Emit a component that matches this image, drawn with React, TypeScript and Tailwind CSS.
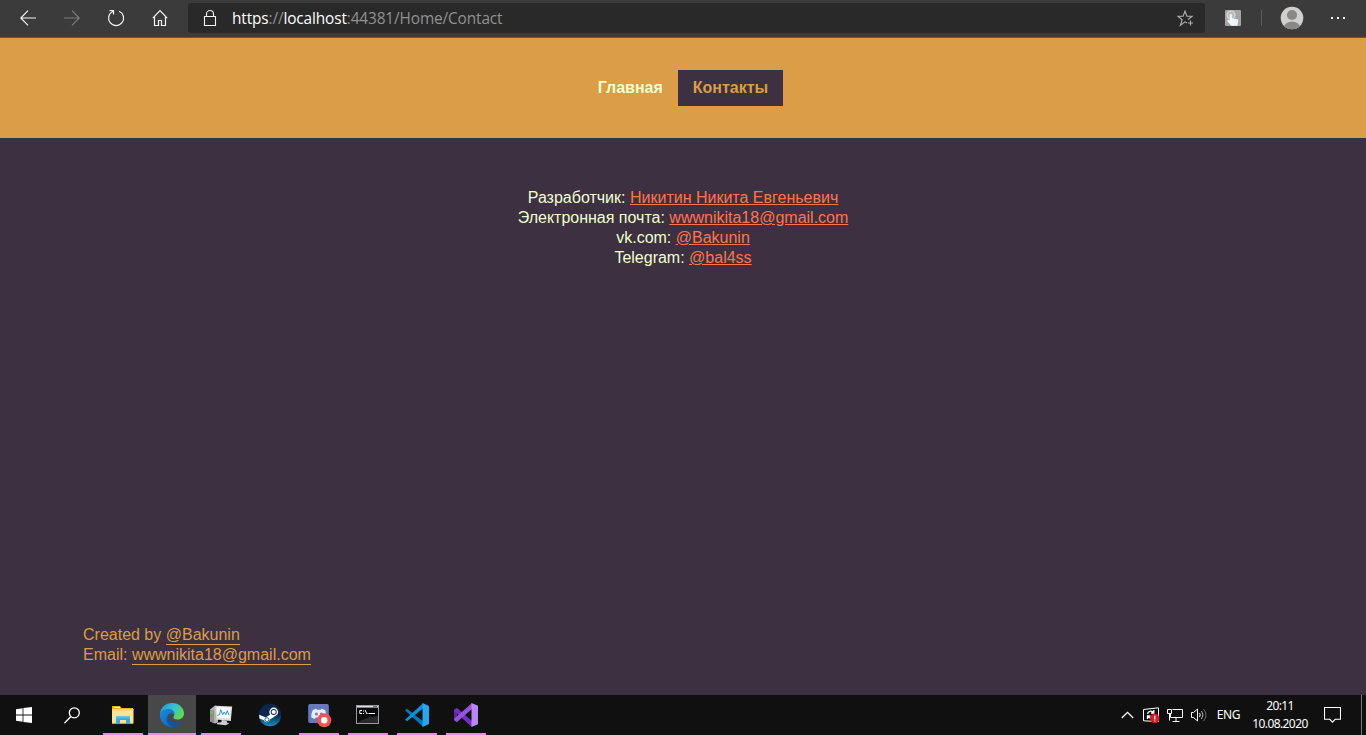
import type { ReactNode } from 'react';

const linkClass = 'text-[#ff7450] underline';
const footerLinkClass = 'border-b border-[#db9d47] pb-px text-[#db9d47]';

function BackIcon() {
  return (
    <svg width="16" height="16" viewBox="0 0 16 16" fill="none" stroke="currentColor" strokeWidth="1.2">
      <path d="M16 8H.8M8 .7.8 8 8 15.3" />
    </svg>
  );
}

function ForwardIcon() {
  return (
    <svg width="16" height="16" viewBox="0 0 16 16" fill="none" stroke="currentColor" strokeWidth="1.2">
      <path d="M0 8h15.2M8 .7 15.2 8 8 15.3" />
    </svg>
  );
}

function ReloadIcon() {
  return (
    <svg width="18" height="18" viewBox="0 0 18 18" fill="none" stroke="currentColor" strokeWidth="1.2">
      <path d="M12.2 2.2A7.5 7.5 0 1 1 6 2.2" />
      <path d="M2.5 1.5h4v4" />
    </svg>
  );
}

function HomeIcon() {
  return (
    <svg width="16" height="18" viewBox="0 0 16 18" fill="none" stroke="currentColor" strokeWidth="1.2">
      <path d="M.8 9.2 8 1.7l7.2 7.5" />
      <path d="M2.5 8v8.5h4v-5h3v5h4V8" />
    </svg>
  );
}

function LockIcon() {
  return (
    <svg width="14" height="18" viewBox="0 0 14 18" fill="none" stroke="currentColor" strokeWidth="1.1">
      <path d="M1.5 7.5h11v9h-11zM3.5 7.5V5a3.5 3.5 0 0 1 7 0v2.5" />
    </svg>
  );
}

function StarIcon() {
  return (
    <svg width="18" height="18" viewBox="0 0 18 18" fill="none" stroke="currentColor" strokeWidth="1.1">
      <path d="m10 14-2-1.2-4.6 3.4 1.7-5.5L.9 7.3h5.2L8 2.2l1.9 5.1h5.2l-4 3.2" />
      <path d="M13.5 11.5v5M11 14h5" />
    </svg>
  );
}

function TouchIcon() {
  return (
    <svg width="16" height="16" viewBox="0 0 16 16">
      <rect width="16" height="16" rx="1" fill="#a5a5a5" />
      <circle cx="6" cy="5" r="4" fill="#bcbcbc" stroke="#d8d8d8" strokeWidth="1.2" />
      <path d="M4.6 4.7q1.2-1.2 2.4 0v3.6l5.4.9q1 .4.8 1.4l-.8 5.2H6.5L2 11l1-1.3 1.6.8z" fill="#f0f6ff" />
    </svg>
  );
}

function AvatarIcon() {
  return (
    <svg width="24" height="24" viewBox="0 0 24 24">
      <defs>
        <clipPath id="avatar">
          <circle cx="12" cy="12" r="11.2" />
        </clipPath>
      </defs>
      <circle cx="12" cy="12" r="11.3" fill="#d2d0ce" />
      <g clipPath="url(#avatar)" fill="#8a8886">
        <circle cx="12" cy="9" r="5.1" />
        <ellipse cx="12" cy="21.2" rx="8" ry="5.6" />
      </g>
    </svg>
  );
}

function MoreIcon() {
  return (
    <svg width="16" height="4" viewBox="0 0 16 4" fill="currentColor">
      <path d="M1 1h2v2H1zM7 1h2v2H7zM13 1h2v2h-2z" />
    </svg>
  );
}

function WindowsIcon() {
  return (
    <svg width="16" height="16" viewBox="0 0 16 16" fill="#fff">
      <path d="M0 2.2 6.6 1.2v6.3H0zM7.4 1.1 16 0v7.5H7.4zM0 8.4h6.6v6.4L0 13.8zM7.4 8.4H16V16l-8.6-1.1z" />
    </svg>
  );
}

function SearchIcon() {
  return (
    <svg width="16" height="17" viewBox="0 0 16 17" fill="none" stroke="#fff" strokeWidth="1.3">
      <circle cx="10.3" cy="5.8" r="5" />
      <path d="m6.8 9.5-6.4 6.7" />
    </svg>
  );
}

function ExplorerIcon() {
  return (
    <svg width="24" height="24" viewBox="0 0 24 24">
      <path d="M1 4V3h8l1.5 2H22v4H1z" fill="#e5b52d" />
      <path d="M3 4h6v1H3z" fill="#fff4cd" />
      <path d="M1 6h21.5v14.5H1z" fill="#ffe393" />
      <path d="M1 7h21.5M1 20h21" stroke="#f4cb62" />
      <path d="M5 21v-7.5h14V21h-4v-4H9v4z" fill="#3aa7e0" />
      <path d="M5 13.5h14v2H5z" fill="#4fbdee" />
    </svg>
  );
}

function EdgeIcon() {
  return (
    <svg width="24" height="24" viewBox="0 0 24 24">
      <defs>
        <linearGradient id="edge-top" x1="0" y1=".2" x2="1" y2=".7">
          <stop stopColor="#2996d5" />
          <stop offset=".48" stopColor="#35c1d6" />
          <stop offset="1" stopColor="#65db3f" />
        </linearGradient>
        <linearGradient id="edge-side" x1="0" y1="0" x2="1" y2="1">
          <stop stopColor="#1b8bd8" />
          <stop offset="1" stopColor="#0c65b9" />
        </linearGradient>
      </defs>
      <path d="M0 11C.7 4 5.4 0 12 0c7 0 12 5 12 10.2 0 4-3 6.3-6.5 6.3-3 0-4.8-1.2-4.2-2.2 2.5-3-.5-6.6-4.8-6.6C4.5 7.7 1.2 9 0 12z" fill="url(#edge-top)" />
      <path d="M0 12c.4-3.8 4-5.9 8.3-5.9 4 0 6.7 2.4 6.2 5.8-1-2.2-4.3-2.4-6-.2-3.5 4.8.4 10.9 6.2 12C6 25.5-.3 19 0 12z" fill="url(#edge-side)" />
      <path d="M8.5 11.6c-1 6.3 5.6 10.3 13.9 6.3C20 21.8 16.7 24 13 23.9 6.9 21.8 4.5 16.5 8.5 11.6z" fill="#14549d" />
    </svg>
  );
}

function MonitorIcon() {
  return (
    <svg width="24" height="24" viewBox="0 0 24 24">
      <path d="m1 6.5 5-4 3 1v16l-3 1-5-2.3z" fill="#b4b4b0" />
      <path d="m1 6.5 4 1v13l-4-2.3z" fill="#8e8e8a" />
      <path d="m1.5 8 2.3.5v2.3l-2.3-.4z" fill="#73c947" />
      <path d="m6.2 2.8 17 .7-1.4 14.6-14.4-1.7z" fill="#dededb" />
      <path d="m7.6 4.2 14 .6-1.1 10.7-12-.9z" fill="#f4f9fc" />
      <path d="m8.3 12.5 2.2-.8 1.2-5 2 5 1.4-2.7 1.7 2.7 1.5-4 1.7 4.5" fill="none" stroke="#3a8fc4" />
      <path d="m12.5 17 5 .5.5 2 2.3 1-3.8 1.8-8.5-1V20l4.5-1z" fill="#d0d0cd" />
    </svg>
  );
}

function SteamIcon() {
  return (
    <svg width="24" height="24" viewBox="0 0 24 24">
      <defs>
        <linearGradient id="steam" x1="0" y1="0" x2="0" y2="1">
          <stop stopColor="#102447" />
          <stop offset=".5" stopColor="#0b2852" />
          <stop offset="1" stopColor="#168fc2" />
        </linearGradient>
      </defs>
      <circle cx="12" cy="12" r="11.2" fill="url(#steam)" />
      <path d="m1.2 11.8 6.5 2.8 4.5-3.1 3-4 4 3-3.6 3.8-3.9 2.3c-.5 3.4-4.7 3.5-5.7.6l-4.5-1.8z" fill="#fff" />
      <circle cx="15.7" cy="9" r="4.4" fill="#fff" />
      <circle cx="15.7" cy="9" r="3" fill="#102b54" />
      <circle cx="15.7" cy="9" r="2.1" fill="#fff" />
      <circle cx="8.9" cy="16.6" r="2" fill="none" stroke="#164370" strokeWidth=".8" />
    </svg>
  );
}

function DiscordIcon() {
  return (
    <svg width="24" height="24" viewBox="0 0 24 24" className="relative left-px top-px">
      <path d="M2 0h17a1.8 1.8 0 0 1 1.8 1.8V22l-3.5-3H2a1.8 1.8 0 0 1-1.8-1.8V1.8A1.8 1.8 0 0 1 2 0z" fill="#6679bd" />
      <path d="M4.8 6 8 4.8l1 1h3.6l1-1L17 6c1.1 2.9 1.6 5.1 1.3 7.6L15 15l-1-1.5H7.8L6.6 15l-3.2-1.4C3.1 11 3.6 8.8 4.8 6z" fill="#e8ecf8" />
      <ellipse cx="8.4" cy="10" rx="1.5" ry="1.6" fill="#6679bd" />
      <ellipse cx="13.4" cy="10" rx="1.5" ry="1.6" fill="#6679bd" />
      <circle cx="16.2" cy="16.2" r="7" fill="#ee5354" />
      <circle cx="16.2" cy="16.2" r="3.2" fill="#fff" />
    </svg>
  );
}

function TerminalIcon() {
  return (
    <svg width="24" height="20" viewBox="0 0 24 20">
      <rect x=".5" y=".5" width="22" height="18" fill="#080808" stroke="#9b9b9b" />
      <path d="M1 1h21v1.6H1z" fill="#d6dde4" />
      <path d="M17 1h4v1h-4z" fill="#667" />
      <path d="M1 18c6-4 12-6 21-7v7z" fill="#292929" />
      <path d="M6 5.5H3.8v3H6M7.5 5.5v1M7.5 8v1M9 5l2 4M12 8v1M13 8.5h6" fill="none" stroke="#fff" />
    </svg>
  );
}

function CodeIcon() {
  return (
    <svg width="24" height="24" viewBox="0 0 24 24">
      <path d="m0 7.2 2-1.4 16 12.4v5.5z" fill="#0877b9" />
      <path d="m0 16.7 2 1.5L18 5.5V.2z" fill="#0d8fda" />
      <path d="m17.5 0 6.5 3v18l-6.5 3z" fill="#28a5ef" />
    </svg>
  );
}

function StudioIcon() {
  return (
    <svg width="24" height="24" viewBox="0 0 24 24">
      <path d="m0 6.5 3-1.4v13.8l-3-1.4z" fill="#5d26a5" />
      <path d="m1 6.3 2-1.2L18 18v6L0 8z" fill="#742fc2" />
      <path d="m1 17.7 2 1.2L18 6V0L0 16z" fill="#9654da" />
      <path d="m17.5 0 6.5 2.8v18.4L17.5 24z" fill="#b987f2" />
    </svg>
  );
}

function TaskButton({ children, open = true, active = false }: { children: ReactNode; open?: boolean; active?: boolean }) {
  return (
    <button className={`flex h-10 w-12 shrink-0 flex-col items-center ${active ? 'bg-[#484848]' : ''}`}>
      <span className="flex h-[38px] items-center justify-center pt-0.5">{children}</span>
      {open && <span className={`h-0.5 bg-[#ec8ae0] ${active ? 'w-12' : 'w-10'}`} />}
    </button>
  );
}

function BrowserBar() {
  return (
    <header className="flex h-[38px] shrink-0 items-start border-b border-[#5a5a5a] bg-[#3b3b3b] text-[#f4f4f4]">
      <div className="flex h-[35px] w-[188px] shrink-0 items-center pl-5">
        <BackIcon />
        <span className="ml-7 text-[#7d7d7d]"><ForwardIcon /></span>
        <span className="ml-[27px]"><ReloadIcon /></span>
        <span className="ml-[27px]"><HomeIcon /></span>
      </div>
      <div className="mt-[3px] flex h-[30px] w-[1017px] shrink-0 items-center rounded-[3px] bg-[#292929] pl-[15px] pr-[10px]">
        <LockIcon />
        <div className="ml-[15px] flex-1 whitespace-pre pt-0.5 font-['Open_Sans','Noto_Sans',sans-serif] text-[15.4px] leading-[20px] tracking-[-0.13px] text-[#919191]">
          <span className="text-white">https</span>://<span className="text-white">localhost</span>:44381/Home/Contact
        </div>
        <span className="text-[#b0b0b0]"><StarIcon /></span>
      </div>
      <div className="flex h-9 flex-1 items-center pl-5">
        <TouchIcon />
        <span className="ml-5 h-4 w-px bg-[#5c5c5c]" />
        <span className="ml-[18px]"><AvatarIcon /></span>
        <span className="ml-[26px]"><MoreIcon /></span>
      </div>
    </header>
  );
}

function Page() {
  return (
    <div className="flex min-h-0 flex-1 flex-col bg-[#3c3041] font-['Liberation_Sans',Arial,sans-serif] text-base">
      <nav className="flex h-[100px] shrink-0 items-center justify-center bg-[#db9d47] font-bold leading-[18px]">
        <a className="px-[15px] py-[9px] text-[#f0ffce]">Главная</a>
        <a className="bg-[#3c3041] px-[15px] py-[9px] text-[#db9d47]">Контакты</a>
      </nav>
      <main className="flex-1 pt-[50px] text-center leading-5 text-[#f0ffce]">
        <p>Разработчик: <a className={linkClass}>Никитин Никита Евгеньевич</a></p>
        <p>Электронная почта: <a className={linkClass}>wwwnikita18@gmail.com</a></p>
        <p>vk.com: <a className={linkClass}>@Bakunin</a></p>
        <p>Telegram: <a className={linkClass}>@bal4ss</a></p>
      </main>
      <footer className="pb-[30px] pl-[83px] leading-5 text-[#db9d47]">
        <p>Created by <a className={footerLinkClass}>@Bakunin</a></p>
        <p>Email: <a className={footerLinkClass}>wwwnikita18@gmail.com</a></p>
      </footer>
    </div>
  );
}

function Tray() {
  return (
    <div className="flex h-10 items-center font-['Noto_Sans',sans-serif] text-xs text-white">
      <svg width="13" height="8" viewBox="0 0 13 8" fill="none" stroke="#fff" strokeWidth="1.3">
        <path d="m.8 7 5.7-5.7L12.2 7" />
      </svg>
      <svg className="ml-[9px]" width="17" height="17" viewBox="0 0 17 17" fill="none" stroke="#fff">
        <path d="M.5 2.5 15.5.8v13.8L.5 13.8z" />
        <path d="M4.5 7c.5-3 4-3.7 6-1.5M10.8 3v3H8M11 8c-.5 3-4 4-6 1.5M4.5 12V9h3" strokeWidth="1.3" />
        <circle cx="11.8" cy="11.5" r="4.7" fill="#dd1725" stroke="none" />
        <path d="M11.8 8.7v3.8M11.8 13.4v1.2" strokeWidth="1.2" />
      </svg>
      <svg className="ml-[7px]" width="17" height="15" viewBox="0 0 17 15" fill="none" stroke="#fff">
        <path d="M5.5 1.5h10v8h-12V6M.5 1.5h4v4h-4zM2.5 5.5v7M9 9.5v4M5.5 13.5h7" />
      </svg>
      <svg className="ml-[7px]" width="17" height="16" viewBox="0 0 17 16" fill="none" stroke="#fff">
        <path d="M.5 5.5h2l4-3.5v12l-4-3.5h-2zM8.5 6q1.5 2 0 4" />
        <path d="M10.5 4q3 4 0 8" stroke="#b6b6b6" />
        <path d="M12.5 2q5 6 0 12" stroke="#676767" />
      </svg>
      <span className="ml-2 w-[25px] text-center tracking-[-0.3px]">ENG</span>
      <div className="ml-[11px] flex w-[56px] flex-col items-center whitespace-nowrap leading-[18px] tracking-[-0.6px]">
        <span>20:11</span>
        <span>10.08.2020</span>
      </div>
      <svg className="ml-4" width="17" height="17" viewBox="0 0 17 17" fill="none" stroke="#fff" strokeWidth="1.1">
        <path d="M.5.5h16v11.8h-5.3l-2.7 2.9-2.7-2.9H.5z" />
      </svg>
      <span className="ml-5 mr-1 h-10 w-px bg-[#777]" />
    </div>
  );
}

function Taskbar() {
  return (
    <footer className="flex h-10 shrink-0 justify-between bg-[#101010]">
      <div className="flex">
        <TaskButton open={false}><WindowsIcon /></TaskButton>
        <TaskButton open={false}><SearchIcon /></TaskButton>
        <div className="ml-[3px] flex gap-px">
          <TaskButton><ExplorerIcon /></TaskButton>
          <TaskButton active><EdgeIcon /></TaskButton>
          <TaskButton><MonitorIcon /></TaskButton>
          <TaskButton open={false}><SteamIcon /></TaskButton>
          <TaskButton><DiscordIcon /></TaskButton>
          <TaskButton><TerminalIcon /></TaskButton>
          <TaskButton><CodeIcon /></TaskButton>
          <TaskButton><StudioIcon /></TaskButton>
        </div>
      </div>
      <Tray />
    </footer>
  );
}

export default function App() {
  return (
    <div className="flex h-[735px] w-[1366px] flex-col overflow-hidden">
      <BrowserBar />
      <Page />
      <Taskbar />
    </div>
  );
}
